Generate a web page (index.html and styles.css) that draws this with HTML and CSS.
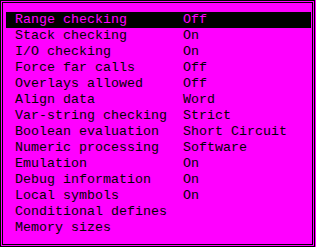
FILE: index.html
```html
<!DOCTYPE html>
<html lang="en">
<head>
    <meta charset="UTF-8">
    <title>Compiler Options</title>
    <link rel="stylesheet" href="styles.css">
</head>
<body>
    <div class="frame">
        <div class="dialog">
            <ul class="options">
                <li class="option selected"><span class="label">Range checking</span><span class="value">Off</span></li>
                <li class="option"><span class="label">Stack checking</span><span class="value">On</span></li>
                <li class="option"><span class="label">I/O checking</span><span class="value">On</span></li>
                <li class="option"><span class="label">Force far calls</span><span class="value">Off</span></li>
                <li class="option"><span class="label">Overlays allowed</span><span class="value">Off</span></li>
                <li class="option"><span class="label">Align data</span><span class="value">Word</span></li>
                <li class="option"><span class="label">Var-string checking</span><span class="value">Strict</span></li>
                <li class="option"><span class="label">Boolean evaluation</span><span class="value">Short Circuit</span></li>
                <li class="option"><span class="label">Numeric processing</span><span class="value">Software</span></li>
                <li class="option"><span class="label">Emulation</span><span class="value">On</span></li>
                <li class="option"><span class="label">Debug information</span><span class="value">On</span></li>
                <li class="option"><span class="label">Local symbols</span><span class="value">On</span></li>
                <li class="option"><span class="label">Conditional defines</span></li>
                <li class="option"><span class="label">Memory sizes</span></li>
            </ul>
        </div>
    </div>
</body>
</html>
```

FILE: styles.css
```css
* {
    margin: 0;
    padding: 0;
    box-sizing: border-box;
}

body {
    background-color: #ff00ff;
    color: #000;
    font-family: "Liberation Mono", "DejaVu Sans Mono", monospace;
    font-size: 13.33px;
    width: 316px;
    height: 247px;
    overflow: hidden;
}

.frame {
    width: 315px;
    height: 247px;
    border: 1px solid #000;
    padding: 1px;
}

.dialog {
    height: 100%;
    border: 1px solid #000;
    padding: 9px 1px 0 3px;
}

.options {
    list-style: none;
}

.option {
    display: flex;
    height: 16px;
    line-height: 16px;
    padding-left: 9px;
    white-space: pre;
}

.option.selected {
    background-color: #000;
    color: #ff00ff;
}

.label {
    width: 168px;
    flex-shrink: 0;
}
```
